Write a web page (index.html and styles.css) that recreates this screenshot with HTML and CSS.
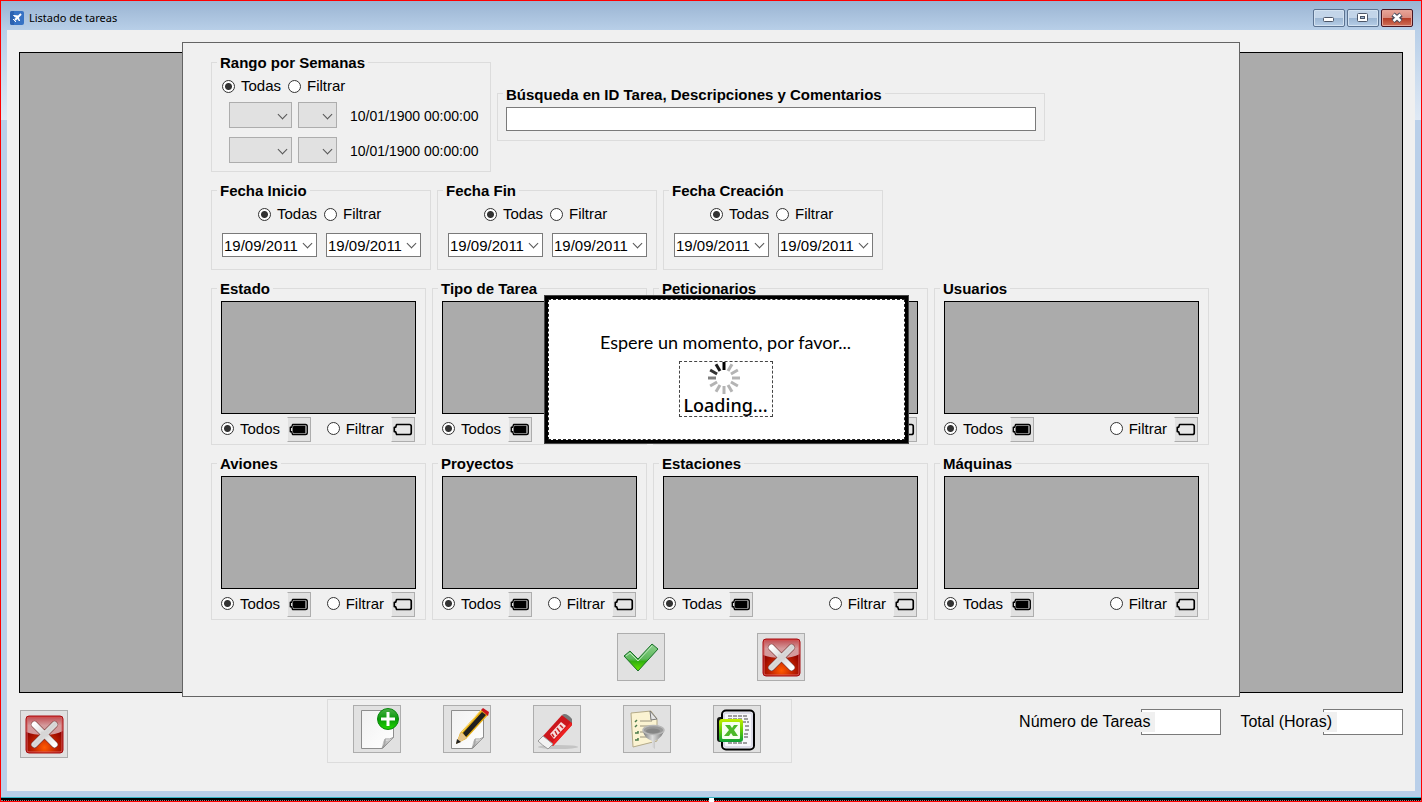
FILE: index.html
```html
<!DOCTYPE html>
<html lang="es">
<head>
<meta charset="utf-8">
<title>Listado de tareas</title>
<link rel="stylesheet" href="styles.css">
</head>
<body>
<svg class="sprite" width="0" height="0" aria-hidden="true">
  <defs>
    <linearGradient id="redTop" x1="0" y1="0" x2="0" y2="1"><stop offset="0" stop-color="#c8161c"/><stop offset=".12" stop-color="#c45a5e"/><stop offset=".5" stop-color="#d49a9c"/></linearGradient>
    <radialGradient id="redGlow" cx=".5" cy=".85" r=".6"><stop offset="0" stop-color="#ff5a00"/><stop offset=".5" stop-color="#c42400"/><stop offset="1" stop-color="#8c0000"/></radialGradient>
    <linearGradient id="silver" x1="0" y1="0" x2="1" y2="1"><stop offset="0" stop-color="#fff"/><stop offset=".5" stop-color="#d4d4d4"/><stop offset="1" stop-color="#fff"/></linearGradient>
    <linearGradient id="greenTick" x1="0" y1="0" x2="0" y2="1"><stop offset="0" stop-color="#8fd08f"/><stop offset=".55" stop-color="#5cb85a"/><stop offset=".65" stop-color="#32b010"/><stop offset="1" stop-color="#6be800"/></linearGradient>
    <linearGradient id="paper" x1="0" y1="0" x2="1" y2="1"><stop offset="0" stop-color="#f1f1f1"/><stop offset="1" stop-color="#fff"/></linearGradient>
    <linearGradient id="greenBall" x1="0" y1="0" x2="0" y2="1"><stop offset="0" stop-color="#4cb04a"/><stop offset=".5" stop-color="#089808"/><stop offset="1" stop-color="#22d800"/></linearGradient>
    <linearGradient id="steel" x1="0" y1="0" x2="1" y2="0"><stop offset="0" stop-color="#777"/><stop offset=".45" stop-color="#ddd"/><stop offset="1" stop-color="#777"/></linearGradient>
    <linearGradient id="lime" x1="0" y1="0" x2="0" y2="1"><stop offset="0" stop-color="#c4f000"/><stop offset=".5" stop-color="#62cc08"/><stop offset="1" stop-color="#0c9c38"/></linearGradient>
    <symbol id="cross" viewBox="0 0 46 46">
      <rect x="5" y="5" width="37" height="37" rx="3" fill="url(#redGlow)"/>
      <path d="M5 8q0-3 3-3h31q3 0 3 3v12q-8 4-18 4Q12 24 5 21z" fill="url(#redTop)"/>
      <rect x="6" y="6" width="35" height="35" rx="2" fill="none" stroke="#d8605c"/>
      <rect x="5" y="5" width="37" height="37" rx="3" fill="none" stroke="#a80c10"/>
      <path d="M13.500 13.500l20 20M33.500 13.500l-20 20" stroke="#7a3a38" stroke-width="7" stroke-linecap="round"/>
      <path d="M13.500 13.500l20 20M33.500 13.500l-20 20" stroke="url(#silver)" stroke-width="6" stroke-linecap="round"/>
      <path d="M20 23h7" stroke="#d6d6d6" stroke-width="5"/>
    </symbol>
    <symbol id="tick" viewBox="0 0 46 46">
      <path d="M6 22l6-5 8 8 14-15 6 5-20 22z" fill="url(#greenTick)" stroke="#187028" stroke-width="1" stroke-linejoin="round"/>
      <path d="M8 22l4-3 8 8 14-15" fill="none" stroke="#bce8bc" stroke-width="1"/>
    </symbol>
    <symbol id="sheet" viewBox="0 0 46 46">
      <path d="M7.500 4.500h32v27l-11 11h-21z" fill="url(#paper)" stroke="#8d8d8d"/>
      <path d="M28 42q4-4 3-9 5 1 9-2z" fill="#fff" stroke="#9a9a9a"/>
      <path d="M28 42q1-8 3-9 1 4 9-2-5 3-12 11z" fill="#999" opacity=".6"/>
    </symbol>
    <symbol id="new" viewBox="0 0 46 46">
      <use href="#sheet"/>
      <circle cx="34" cy="13" r="10.500" fill="url(#greenBall)" stroke="#08880c"/>
      <path d="M34 6v14M27 13h14" stroke="#fff" stroke-width="3"/>
    </symbol>
    <symbol id="edit" viewBox="0 0 46 46">
      <use href="#sheet"/>
      <path d="M12 38l4-11 21-23 7 5-22 24z" fill="#e6ae14"/>
      <path d="M19 27L38 6l4 3-20 22z" fill="#202020"/>
      <path d="M18 26L37 4" stroke="#ffe27a"/>
      <path d="M12 38l5-12 6 6z" fill="#e4c48c"/>
      <path d="M12 38l1-5 4 3z" fill="#222"/>
      <path d="M37 4l2-2 6 4-1 4z" fill="#c8141c"/>
    </symbol>
    <symbol id="erase" viewBox="0 0 46 46">
      <ellipse cx="24" cy="41" rx="20" ry="2" fill="#c4c4c4"/>
      <path d="M9 30L28 9l10 6v4L19 40z" fill="#cc161c"/>
      <path d="M17 38L37 16l1 3-19 21z" fill="#ee2020"/>
      <path d="M28 9q4-3 10 4v4l-9-7z" fill="#777"/>
      <path d="M16 28l11-12 5 4-12 13z" fill="#f7dede"/>
      <path d="M18 28l2 3M21 25l2 4M23 22l3 4M26 19l3 3" stroke="#c22" stroke-width="1.500"/>
      <path d="M9 30l10 8-5 5q-6-4-10-8z" fill="#f2f2f2" stroke="#999"/>
    </symbol>
    <symbol id="filter" viewBox="0 0 46 46">
      <path d="M7 7l20-2 6 8v22L9 41z" fill="#fbf3d2" stroke="#b4aa88"/>
      <path d="M26 5l1 9 6-1z" fill="#e4e4e4" stroke="#777"/>
      <path d="M16 15h12M16 20h10M16 26h8M16 31h9" stroke="#98917a"/>
      <path d="M11 16l2-2M11 21l2-2M11 27h3v-2M11 34h3v-2" stroke="#4a7a4a" stroke-width="1.500" fill="none"/>
      <path d="M19 25q1 7 9 10v6l3 2v-8q8-4 9-11z" fill="url(#steel)"/>
      <ellipse cx="29.500" cy="24" rx="10.500" ry="4.500" fill="#999" stroke="#b8b8b8" stroke-width="1.500"/>
      <ellipse cx="29" cy="25" rx="7" ry="2.500" fill="#858585"/>
    </symbol>
    <symbol id="excel" viewBox="0 0 46 46">
      <rect x="3" y="11" width="10" height="25" rx="3" fill="#111"/>
      <rect x="8" y="4.500" width="32" height="39" rx="4" fill="#f7f7fb" stroke="#000" stroke-width="2"/>
      <rect x="10" y="7" width="28" height="34" rx="2" fill="none" stroke="#dcdce8" stroke-width="2"/>
      <path d="M14 10h20M14 13h14M30 13h5M28 16h7M31 20h4M31 24h4M30 28h5M30 31h5M14 37h20" stroke="#444" stroke-dasharray="4 1"/>
      <rect x="5" y="13" width="24" height="23" rx="3" fill="url(#lime)"/>
      <rect x="8" y="16" width="18" height="17" rx="1" fill="#f6fff0"/>
      <path d="M11 19h5l2 3 2-3h4l-4 5 4 6h-5l-2-3-2 3h-5l5-6z" fill="#4cb828"/>
    </symbol>
    <symbol id="full" viewBox="0 0 24 24"><path d="M5 6.500h14q2 0 2 2v7q0 2-2 2H5l-1-3H2.500v-5H4z" fill="#ddd" stroke="#000" stroke-width="1.500" stroke-linejoin="round"/><path d="M6 8h13v8H6l-1-2v-4z" fill="#000"/></symbol>
    <symbol id="empty" viewBox="0 0 24 24"><path d="M5 6.500h14q2 0 2 2v7q0 2-2 2H5l-1-3H2.500v-5H4z" fill="#e6e6e6" stroke="#000" stroke-width="1.800" stroke-linejoin="round"/></symbol>
  </defs>
</svg>
<div class="window">
  <header class="titlebar">
    <svg class="app-icon" viewBox="0 0 14 14" aria-hidden="true"><rect width="14" height="14" rx="2" fill="#3672c4"/><path d="M0 2q0-2 2-2h2v14H2q-2 0-2-2z" fill="#2c62b0"/><path d="M11 3L5 9" stroke="#fff" stroke-width="2"/><path d="M3.500 4.500L8 5l1.500 5L7 7z" fill="#fff" stroke="#fff"/><path d="M3 8l3 3" stroke="#fff"/></svg>
    <h1 class="title">Listado de tareas</h1>
    <button class="win-btn" aria-label="Minimizar"><svg viewBox="0 0 30 16"><rect x="9.500" y="7.500" width="10" height="4" rx="1" fill="#fff" stroke="#4c5668"/></svg></button>
    <button class="win-btn" aria-label="Maximizar"><svg viewBox="0 0 30 16"><rect x="9.500" y="3.500" width="10" height="8" rx="1" fill="#fff" stroke="#4c5668"/><rect x="12.500" y="6.500" width="4" height="2" fill="#9db4d0" stroke="#4c5668"/></svg></button>
    <button class="win-btn close" aria-label="Cerrar"><svg viewBox="0 0 30 16"><path d="M11 4.500l8 6.500M19 4.500L11 11" stroke="#4a4c5c" stroke-width="5"/><path d="M11.500 4.500l7 6.500M18.500 4.500l-7 6.500" stroke="#fff" stroke-width="2.500"/></svg></button>
  </header>
  <main class="client">
    <div class="stage">
      <div class="results"></div>
      <section class="dialog">
        <div class="row">
          <fieldset class="group weeks">
            <legend>Rango por Semanas</legend>
            <div class="radios"><label class="radio"><input type="radio" name="sem" checked>Todas</label><label class="radio"><input type="radio" name="sem">Filtrar</label></div>
            <div class="week"><span class="pick wide"><select disabled aria-label="Año inicial"></select></span><span class="pick small"><select disabled aria-label="Semana inicial"></select></span><span class="stamp">10/01/1900 00:00:00</span></div>
            <div class="week"><span class="pick wide"><select disabled aria-label="Año final"></select></span><span class="pick small"><select disabled aria-label="Semana final"></select></span><span class="stamp">10/01/1900 00:00:00</span></div>
          </fieldset>
          <fieldset class="group search">
            <legend id="busqueda">Búsqueda en ID Tarea, Descripciones y Comentarios</legend>
            <input class="box" type="text" aria-labelledby="busqueda">
          </fieldset>
        </div>
        <div class="row">
          <fieldset class="group dates">
            <legend>Fecha Inicio</legend>
            <div class="radios"><label class="radio"><input type="radio" name="ini" checked>Todas</label><label class="radio"><input type="radio" name="ini">Filtrar</label></div>
            <div class="range"><span class="pick date"><select aria-label="Inicio desde"><option>19/09/2011</option></select></span><span class="pick date"><select aria-label="Inicio hasta"><option>19/09/2011</option></select></span></div>
          </fieldset>
          <fieldset class="group dates">
            <legend>Fecha Fin</legend>
            <div class="radios"><label class="radio"><input type="radio" name="fin" checked>Todas</label><label class="radio"><input type="radio" name="fin">Filtrar</label></div>
            <div class="range"><span class="pick date"><select aria-label="Fin desde"><option>19/09/2011</option></select></span><span class="pick date"><select aria-label="Fin hasta"><option>19/09/2011</option></select></span></div>
          </fieldset>
          <fieldset class="group dates">
            <legend>Fecha Creación</legend>
            <div class="radios"><label class="radio"><input type="radio" name="cre" checked>Todas</label><label class="radio"><input type="radio" name="cre">Filtrar</label></div>
            <div class="range"><span class="pick date"><select aria-label="Creación desde"><option>19/09/2011</option></select></span><span class="pick date"><select aria-label="Creación hasta"><option>19/09/2011</option></select></span></div>
          </fieldset>
        </div>
        <div class="lists">
          <fieldset class="group list"><legend>Estado</legend><div class="items"></div>
            <div class="options"><label class="radio"><input type="radio" name="est" checked>Todos</label><button class="mini" aria-label="Marcar todos"><svg><use href="#full"/></svg></button><label class="radio last"><input type="radio" name="est">Filtrar</label><button class="mini" aria-label="Desmarcar todos"><svg><use href="#empty"/></svg></button></div></fieldset>
          <fieldset class="group list"><legend>Tipo de Tarea</legend><div class="items"></div>
            <div class="options"><label class="radio"><input type="radio" name="tip" checked>Todos</label><button class="mini" aria-label="Marcar todos"><svg><use href="#full"/></svg></button><label class="radio last"><input type="radio" name="tip">Filtrar</label><button class="mini" aria-label="Desmarcar todos"><svg><use href="#empty"/></svg></button></div></fieldset>
          <fieldset class="group list"><legend>Peticionarios</legend><div class="items"></div>
            <div class="options"><label class="radio"><input type="radio" name="pet" checked>Todos</label><button class="mini" aria-label="Marcar todos"><svg><use href="#full"/></svg></button><label class="radio last"><input type="radio" name="pet">Filtrar</label><button class="mini" aria-label="Desmarcar todos"><svg><use href="#empty"/></svg></button></div></fieldset>
          <fieldset class="group list"><legend>Usuarios</legend><div class="items"></div>
            <div class="options"><label class="radio"><input type="radio" name="usu" checked>Todos</label><button class="mini" aria-label="Marcar todos"><svg><use href="#full"/></svg></button><label class="radio last"><input type="radio" name="usu">Filtrar</label><button class="mini" aria-label="Desmarcar todos"><svg><use href="#empty"/></svg></button></div></fieldset>
          <fieldset class="group list"><legend>Aviones</legend><div class="items"></div>
            <div class="options"><label class="radio"><input type="radio" name="avi" checked>Todos</label><button class="mini" aria-label="Marcar todos"><svg><use href="#full"/></svg></button><label class="radio last"><input type="radio" name="avi">Filtrar</label><button class="mini" aria-label="Desmarcar todos"><svg><use href="#empty"/></svg></button></div></fieldset>
          <fieldset class="group list"><legend>Proyectos</legend><div class="items"></div>
            <div class="options"><label class="radio"><input type="radio" name="pro" checked>Todos</label><button class="mini" aria-label="Marcar todos"><svg><use href="#full"/></svg></button><label class="radio last"><input type="radio" name="pro">Filtrar</label><button class="mini" aria-label="Desmarcar todos"><svg><use href="#empty"/></svg></button></div></fieldset>
          <fieldset class="group list"><legend>Estaciones</legend><div class="items"></div>
            <div class="options"><label class="radio"><input type="radio" name="esc" checked>Todas</label><button class="mini" aria-label="Marcar todas"><svg><use href="#full"/></svg></button><label class="radio last"><input type="radio" name="esc">Filtrar</label><button class="mini" aria-label="Desmarcar todas"><svg><use href="#empty"/></svg></button></div></fieldset>
          <fieldset class="group list"><legend>Máquinas</legend><div class="items"></div>
            <div class="options"><label class="radio"><input type="radio" name="maq" checked>Todas</label><button class="mini" aria-label="Marcar todas"><svg><use href="#full"/></svg></button><label class="radio last"><input type="radio" name="maq">Filtrar</label><button class="mini" aria-label="Desmarcar todas"><svg><use href="#empty"/></svg></button></div></fieldset>
        </div>
        <div class="actions">
          <button class="tool" aria-label="Aceptar"><svg><use href="#tick"/></svg></button>
          <button class="tool" aria-label="Cancelar"><svg><use href="#cross"/></svg></button>
        </div>
        <div class="wait" role="status">
          <div class="wait-body">
            <p class="wait-text">Espere un momento, por favor...</p>
            <div class="spinner">
              <svg viewBox="0 0 32 32" aria-hidden="true" stroke-width="3">
                <g stroke="#b4b4b4"><path d="M16 0v8" transform="rotate(30 16 16)"/><path d="M16 0v8" transform="rotate(60 16 16)"/><path d="M16 0v8" transform="rotate(90 16 16)"/><path d="M16 0v8" transform="rotate(120 16 16)"/><path d="M16 0v8" transform="rotate(150 16 16)"/><path d="M16 0v8" transform="rotate(180 16 16)"/><path d="M16 0v8" transform="rotate(210 16 16)"/><path d="M16 0v8" transform="rotate(240 16 16)"/></g>
                <path d="M16 0v8" transform="rotate(270 16 16)" stroke="#808080"/><path d="M16 0v8" transform="rotate(300 16 16)" stroke="#333"/><path d="M16 0v8" transform="rotate(330 16 16)" stroke="#1a1a1a"/><path d="M16 0v8" stroke="#000"/>
              </svg>
              <span>Loading...</span>
            </div>
          </div>
        </div>
      </section>
    </div>
    <footer class="footer">
      <button class="tool exit" aria-label="Salir"><svg><use href="#cross"/></svg></button>
      <div class="toolbar">
        <button class="tool" aria-label="Nueva tarea"><svg><use href="#new"/></svg></button>
        <button class="tool" aria-label="Editar"><svg><use href="#edit"/></svg></button>
        <button class="tool" aria-label="Borrar"><svg><use href="#erase"/></svg></button>
        <button class="tool" aria-label="Filtrar"><svg><use href="#filter"/></svg></button>
        <button class="tool" aria-label="Exportar a Excel"><svg><use href="#excel"/></svg></button>
      </div>
      <div class="totals">
        <div class="total"><label for="num">Número de Tareas</label><input class="box" id="num" type="text"></div>
        <div class="total"><label for="horas">Total (Horas)</label><input class="box" id="horas" type="text"></div>
      </div>
    </footer>
  </main>
  <div class="edge"><i class="handle"></i></div>
</div>
</body>
</html>
```
FILE: styles.css
```css
* { box-sizing: border-box; }
body { margin: 0; font: 15px/20px "Liberation Sans", Arial, sans-serif; color: #000; }
button, input, select { font: inherit; margin: 0; }
svg { display: block; }
.sprite { position: absolute; }

.window {
  display: flex; flex-direction: column; min-height: 100vh;
  border: 1px solid #f00;
  background: linear-gradient(#9ab4d2 0, #b8cfe8 29px, #dfe9f5 119px, #b9cfe9 119px);
}
.titlebar { display: flex; align-items: center; gap: 2px; height: 29px; padding: 5px 8px 0 9px; }
.app-icon { width: 14px; height: 14px; }
.title { flex: 1; margin: 0; padding-left: 3px; font: 11px/16px "Noto Sans", sans-serif; }
.win-btn {
  width: 32px; height: 18px; padding: 0; border: 1px solid #5b7290; border-radius: 2px;
  background: linear-gradient(#c3d5e9 50%, #9bb5d2 50%, #b7cee7);
  box-shadow: inset 0 0 0 1px #d3e2f1;
}
.win-btn svg { width: 30px; height: 16px; }
.win-btn.close {
  border-color: #481420;
  background: linear-gradient(#e9a598 0, #d8897c 50%, #b43a24 50%, #cf7058);
  box-shadow: inset 0 0 0 1px #e4a397;
}

.client { flex: 1; margin: 0 6px 6px; background: #f0f0f0; }
.stage { display: grid; padding: 0 12px; }
.stage > * { grid-area: 1 / 1; }
.results { margin: 22px 0 4px; background: #ababab; border: 1px solid #000; }
.dialog {
  position: relative; justify-self: center; display: flex; flex-direction: column; gap: 10px;
  margin-top: 12px; padding: 11px 30px 15px 28px; border: 1px solid #646464; background: #f0f0f0;
}
.row { display: flex; align-items: center; gap: 6px; }
.lists { display: grid; grid-template-columns: 215px 215px 275px 275px; gap: 10px 6px; }

.group { min-width: 0; margin: 0; padding: 0 10px; border: 1px solid #dcdcdc; }
.group legend { margin-left: -5px; padding: 2px 3px 0; font-weight: bold; line-height: 14px; }
.weeks { width: 280px; padding-top: 6px; padding-bottom: 8px; }
.search { width: 548px; padding: 5px 8px 9px; }
.search .box { width: 100%; height: 24px; }
.dates { width: 220px; padding-top: 6px; padding-bottom: 12px; }
.dates .radios { padding-left: 36px; }
.list { padding: 5px 9px 2px; }
.group.search legend { margin-left: -3px; }
.group.list legend { margin-left: -4px; }

.radios { display: flex; gap: 7px; }
.radio { display: flex; align-items: center; gap: 6px; }
.radio input {
  appearance: none; width: 13px; height: 13px; border: 1px solid #333; border-radius: 50%;
  background: #fff;
}
.radio input:checked { background: radial-gradient(circle, #333 0 3px, #fff 4px); }

.week { display: flex; align-items: center; gap: 6px; padding: 6px 0 0 7px; }
.week + .week { padding-top: 9px; }
.stamp { padding: 1px 0 0 7px; font-size: 14px; white-space: nowrap; }
.pick { position: relative; flex: none; }
.pick select {
  display: block; width: 100%; height: 26px; padding: 0 1px; appearance: none; opacity: 1;
  border: 1px solid #adadad; border-radius: 0; background: #e1e1e1; color: #000;
}
.pick::after {
  content: ""; position: absolute; right: 6px; top: 9px; width: 6px; height: 6px;
  border: solid #555; border-width: 0 1px 1px 0; transform: rotate(45deg); pointer-events: none;
}
.wide { width: 63px; }
.small { width: 39px; }
.date { width: 95px; }
.date select { height: 24px; padding-top: 1px; border-color: #7a7a7a; background: #fff; }
.date::after { top: 7px; }
.range { display: flex; gap: 9px; padding-top: 9px; }
.box { padding: 0 4px; border: 1px solid #7a7a7a; border-radius: 0; background: #fff; }

.items { height: 113px; border: 1px solid #000; background: #ababab; }
.options { display: flex; align-items: center; gap: 7px; padding: 3px 1px 0 0; }
.options .radio { padding-bottom: 2px; }
.options .last { margin-left: auto; }
.mini {
  width: 24px; height: 25px; padding: 0; background: #e1e1e1;
  border: 1px solid #adadad; border-left-color: #f0f0f0;
}
.mini svg { width: 22px; height: 23px; }

.actions { display: flex; justify-content: center; gap: 92px; padding: 3px 0 0 2px; }
.tool { width: 48px; height: 48px; padding: 0; border: 1px solid #adadad; background: #e1e1e1; }
.tool svg { width: 46px; height: 46px; }

.wait {
  position: absolute; left: 361px; top: 252px; width: 365px; height: 149px; padding: 3px;
  border: 1px solid #444; background: #000;
}
.wait-body {
  display: flex; flex-direction: column; align-items: center; gap: 7px; height: 100%;
  padding: 30px 2px 0 0; border: 1px dashed #222; background: #fff;
}
.wait-text { margin: 0; font: 18px/24px Lato, sans-serif; }
.spinner {
  display: flex; flex-direction: column; align-items: center; width: 94px; height: 56px;
  border: 1px dashed #444; font: 500 18px/22px "Noto Sans", sans-serif;
}
.spinner svg { width: 32px; height: 32px; margin-right: 4px; }

.footer { display: flex; align-items: flex-start; padding: 2px 12px 28px 13px; }
.exit { margin-top: 11px; }
.toolbar { display: flex; gap: 42px; margin-left: 259px; padding: 5px 30px 9px 25px; border: 1px solid #dcdcdc; }
.totals { display: flex; gap: 19px; margin: 10px 0 0 auto; font-size: 16px; }
.total { display: flex; align-items: center; }
.total label { position: relative; margin-right: -14px; padding-right: 5px; background: #f0f0f0; white-space: nowrap; }
.total .box { width: 80px; height: 26px; }

.edge { position: relative; height: 4px; border-top: 1px solid #35b4c4; border-bottom: 1px dotted #888; background: #000; }
.handle { position: absolute; left: 50%; bottom: -2px; width: 5px; height: 4px; margin-left: -2px; background: #fff; }
```
